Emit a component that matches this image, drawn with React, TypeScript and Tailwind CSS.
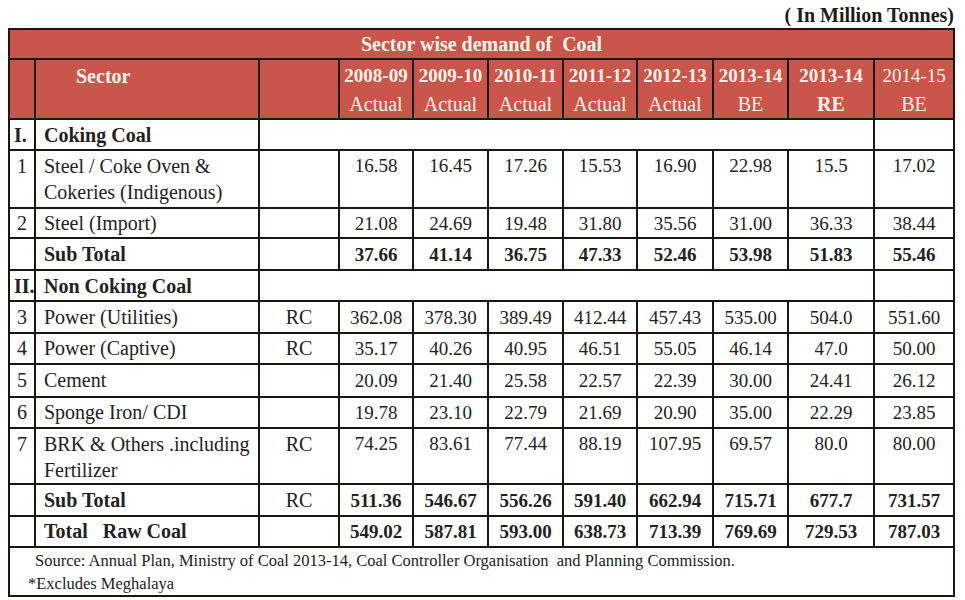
const years = [
  { y: '2008-09', t: 'Actual', yb: true, tb: false },
  { y: '2009-10', t: 'Actual', yb: true, tb: false },
  { y: '2010-11', t: 'Actual', yb: true, tb: false },
  { y: '2011-12', t: 'Actual', yb: true, tb: false },
  { y: '2012-13', t: 'Actual', yb: true, tb: false },
  { y: '2013-14', t: 'BE', yb: true, tb: false },
  { y: '2013-14', t: 'RE', yb: true, tb: true },
  { y: '2014-15', t: 'BE', yb: false, tb: false },
]

type Row = {
  no: string
  name: string[]
  rc?: string
  vals: string[]
  bold?: boolean
  h: string
}

const coking: Row[] = [
  { no: '1', name: ['Steel / Coke Oven &', 'Cokeries (Indigenous)'], vals: ['16.58', '16.45', '17.26', '15.53', '16.90', '22.98', '15.5', '17.02'], h: 'h-[58px]' },
  { no: '2', name: ['Steel (Import)'], vals: ['21.08', '24.69', '19.48', '31.80', '35.56', '31.00', '36.33', '38.44'], h: 'h-[30px]' },
  { no: '', name: ['Sub Total'], vals: ['37.66', '41.14', '36.75', '47.33', '52.46', '53.98', '51.83', '55.46'], bold: true, h: 'h-[32px]' },
]

const nonCoking: Row[] = [
  { no: '3', name: ['Power (Utilities)'], rc: 'RC', vals: ['362.08', '378.30', '389.49', '412.44', '457.43', '535.00', '504.0', '551.60'], h: 'h-[32px]' },
  { no: '4', name: ['Power (Captive)'], rc: 'RC', vals: ['35.17', '40.26', '40.95', '46.51', '55.05', '46.14', '47.0', '50.00'], h: 'h-[31px]' },
  { no: '5', name: ['Cement'], vals: ['20.09', '21.40', '25.58', '22.57', '22.39', '30.00', '24.41', '26.12'], h: 'h-[33px]' },
  { no: '6', name: ['Sponge Iron/ CDI'], vals: ['19.78', '23.10', '22.79', '21.69', '20.90', '35.00', '22.29', '23.85'], h: 'h-[31px]' },
  { no: '7', name: ['BRK & Others .including', 'Fertilizer'], rc: 'RC', vals: ['74.25', '83.61', '77.44', '88.19', '107.95', '69.57', '80.0', '80.00'], h: 'h-[56px]' },
  { no: '', name: ['Sub Total'], rc: 'RC', vals: ['511.36', '546.67', '556.26', '591.40', '662.94', '715.71', '677.7', '731.57'], bold: true, h: 'h-[32px]' },
  { no: '', name: ['Total\u00a0\u00a0 Raw Coal'], vals: ['549.02', '587.81', '593.00', '638.73', '713.39', '769.69', '729.53', '787.03'], bold: true, h: 'h-[31px]' },
]

const cell = 'border-2 border-[#1c1512] px-0 py-0'

function DataRow({ r }: { r: Row }) {
  const multi = r.name.length > 1
  const va = multi ? 'align-top pt-[2px] leading-[26px]' : 'align-middle leading-[25px]'
  return (
    <tr className={r.h}>
      <td className={`${cell} ${va} text-center`}>{r.no}</td>
      <td className={`${cell} ${va} pl-[8px] ${r.bold ? 'font-bold' : ''}`}>
        {r.name.map((n, i) => (
          <div key={i} className="whitespace-pre">{n}</div>
        ))}
      </td>
      <td className={`${cell} ${va} text-center`}>{r.rc ?? ''}</td>
      {r.vals.map((v, i) => (
        <td key={i} className={`${cell} ${va} text-center text-[19px] ${r.bold ? 'font-bold' : ''}`}>
          {v}
        </td>
      ))}
    </tr>
  )
}

function SectionRow({ no, label }: { no: string; label: string }) {
  return (
    <tr className="h-[31px]">
      <td className={`${cell} font-bold pl-[4px] align-middle`}>{no}</td>
      <td className={`${cell} font-bold pl-[8px] align-middle`}>{label}</td>
      <td className={cell} colSpan={8}></td>
      <td className={cell}></td>
    </tr>
  )
}

export default function App() {
  return (
    <div className="w-[965px] h-[600px] bg-white text-[#222] font-['Liberation_Serif',serif] text-[20px] leading-[24px] overflow-hidden">
      <div className="h-[28px] pr-[11px] flex justify-end items-center pt-[2px] font-bold text-[20px] text-[#1e1a18]">
        ( In Million Tonnes)
      </div>
      <div className="pl-[8px]">
        <table className="w-[945px] table-fixed border-collapse border-2 border-[#1c1512]">
          <colgroup>
            <col className="w-[26px]" />
            <col className="w-[224px]" />
            <col className="w-[80px]" />
            <col className="w-[74px]" />
            <col className="w-[75px]" />
            <col className="w-[75px]" />
            <col className="w-[74px]" />
            <col className="w-[76px]" />
            <col className="w-[75px]" />
            <col className="w-[86px]" />
            <col className="w-[80px]" />
          </colgroup>
          <thead className="bg-[#c8564a] text-[#fdf3ec]">
            <tr className="h-[30px]">
              <th colSpan={11} className={`${cell} font-bold text-center`}>
                Sector wise demand of&nbsp; Coal
              </th>
            </tr>
            <tr className="h-[60px]">
              <th className={cell}></th>
              <th className={`${cell} align-top text-left pl-[40px] pt-[2px] leading-[28px] font-bold`}>Sector</th>
              <th className={cell}></th>
              {years.map((y, i) => (
                <th key={i} className={`${cell} align-top text-center pt-[2px] leading-[28px] text-[19px]`}>
                  <div className={y.yb ? 'font-bold' : 'font-normal'}>{y.y}</div>
                  <div className={`text-[20px] ${y.tb ? 'font-bold' : 'font-normal'}`}>{y.t}</div>
                </th>
              ))}
            </tr>
          </thead>
          <tbody>
            <SectionRow no="I." label="Coking Coal" />
            {coking.map((r, i) => (
              <DataRow key={i} r={r} />
            ))}
            <SectionRow no="II." label="Non Coking Coal" />
            {nonCoking.map((r, i) => (
              <DataRow key={i} r={r} />
            ))}
            <tr className="h-[47px]">
              <td colSpan={11} className={`${cell} align-top text-[16.5px] leading-[23px] pt-[1px]`}>
                <div className="pl-[25px] whitespace-pre">
                  Source: Annual Plan, Ministry of Coal 2013-14, Coal Controller Organisation  and Planning Commission.
                </div>
                <div className="pl-[18px]">*Excludes Meghalaya</div>
              </td>
            </tr>
          </tbody>
        </table>
      </div>
    </div>
  )
}
